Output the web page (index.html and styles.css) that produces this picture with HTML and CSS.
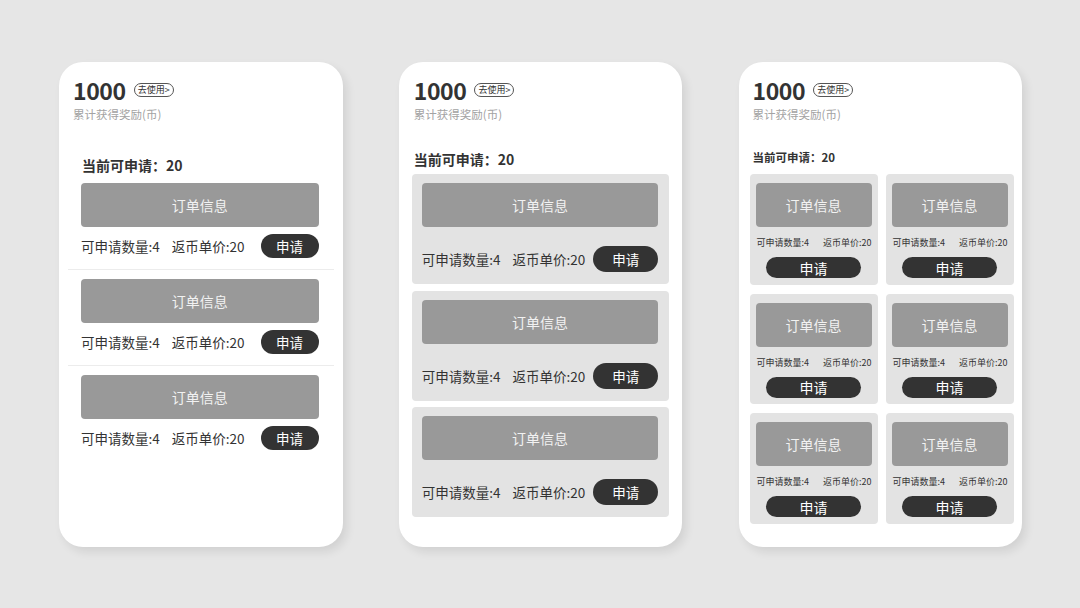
FILE: index.html
```html
<!DOCTYPE html>
<html lang="zh-CN">
<head>
<meta charset="utf-8">
<title>申请</title>
<link rel="stylesheet" href="styles.css">
</head>
<body>
<div class="stage">

  <section class="card">
    <div class="head">
      <div class="amount-row"><span class="amount">1000</span><span class="badge">去使用&gt;</span></div>
      <div class="sub">累计获得奖励(币)</div>
    </div>
    <div class="title t1">当前可申请：20</div>
    <div class="list1">
      <div class="item1">
        <div class="order">订单信息</div>
        <div class="row1"><span class="info">可申请数量:4</span><span class="info">返币单价:20</span><span class="btn b1">申请</span></div>
      </div>
      <div class="item1">
        <div class="order">订单信息</div>
        <div class="row1"><span class="info">可申请数量:4</span><span class="info">返币单价:20</span><span class="btn b1">申请</span></div>
      </div>
      <div class="item1 last">
        <div class="order">订单信息</div>
        <div class="row1"><span class="info">可申请数量:4</span><span class="info">返币单价:20</span><span class="btn b1">申请</span></div>
      </div>
    </div>
  </section>

  <section class="card">
    <div class="head h2">
      <div class="amount-row"><span class="amount">1000</span><span class="badge">去使用&gt;</span></div>
      <div class="sub">累计获得奖励(币)</div>
    </div>
    <div class="title t2">当前可申请：20</div>
    <div class="list2">
      <div class="item2">
        <div class="order">订单信息</div>
        <div class="row2"><span class="info">可申请数量:4</span><span class="info">返币单价:20</span><span class="btn b2">申请</span></div>
      </div>
      <div class="item2">
        <div class="order">订单信息</div>
        <div class="row2"><span class="info">可申请数量:4</span><span class="info">返币单价:20</span><span class="btn b2">申请</span></div>
      </div>
      <div class="item2">
        <div class="order">订单信息</div>
        <div class="row2"><span class="info">可申请数量:4</span><span class="info">返币单价:20</span><span class="btn b2">申请</span></div>
      </div>
    </div>
  </section>

  <section class="card">
    <div class="head">
      <div class="amount-row"><span class="amount">1000</span><span class="badge">去使用&gt;</span></div>
      <div class="sub">累计获得奖励(币)</div>
    </div>
    <div class="title t3">当前可申请：20</div>
    <div class="grid3">
      <div class="item3"><div class="order">订单信息</div><div class="row3"><span>可申请数量:4</span><span>返币单价:20</span></div><span class="btn b3">申请</span></div>
      <div class="item3"><div class="order">订单信息</div><div class="row3"><span>可申请数量:4</span><span>返币单价:20</span></div><span class="btn b3">申请</span></div>
      <div class="item3"><div class="order">订单信息</div><div class="row3"><span>可申请数量:4</span><span>返币单价:20</span></div><span class="btn b3">申请</span></div>
      <div class="item3"><div class="order">订单信息</div><div class="row3"><span>可申请数量:4</span><span>返币单价:20</span></div><span class="btn b3">申请</span></div>
      <div class="item3"><div class="order">订单信息</div><div class="row3"><span>可申请数量:4</span><span>返币单价:20</span></div><span class="btn b3">申请</span></div>
      <div class="item3"><div class="order">订单信息</div><div class="row3"><span>可申请数量:4</span><span>返币单价:20</span></div><span class="btn b3">申请</span></div>
    </div>
  </section>

</div>
</body>
</html>
```
FILE: styles.css
```css
* { box-sizing: border-box; }
html, body {
  margin: 0;
  padding: 0;
  width: 1080px;
  height: 608px;
  overflow: hidden;
  background: #e6e6e6;
  font-family: "Noto Sans CJK SC", "Noto Sans", sans-serif;
  color: #333;
}
.stage {
  display: flex;
  gap: 56.25px;
  padding: 62px 0 0 59px;
}
.card {
  width: 283.5px;
  height: 485px;
  flex-shrink: 0;
  background: #fff;
  border-radius: 24px;
  box-shadow: 4px 5px 10px rgba(0, 0, 0, 0.09);
  padding-top: 16px;
  display: flex;
  flex-direction: column;
}
.head { padding-left: 14px; }
.head.h2 { padding-left: 15px; }
.amount-row {
  display: flex;
  align-items: center;
  height: 24px;
}
.amount {
  font-size: 23px;
  line-height: 24px;
  font-weight: 700;
  color: #333;
  letter-spacing: -0.4px;
}
.badge {
  margin-left: 8px;
  height: 14px;
  padding: 0 3px;
  border: 1px solid #555;
  border-radius: 7px;
  font-size: 9px;
  line-height: 12px;
  color: #333;
}
.sub {
  margin-top: 4px;
  font-size: 11.5px;
  line-height: 16px;
  color: #a3a3a3;
}
.title {
  font-weight: 700;
  color: #333;
}
.t1 { margin: 34px 0 0 23px; font-size: 14px; line-height: 18px; }
.t2 { margin: 28px 0 0 15px; font-size: 14px; line-height: 18px; }
.t3 { margin: 27px 0 0 14px; font-size: 11.5px; line-height: 16px; }

.order {
  height: 44px;
  background: #999;
  border-radius: 4px;
  color: #f2f2f2;
  font-size: 14px;
  display: flex;
  align-items: center;
  justify-content: center;
}
.btn {
  flex-shrink: 0;
  background: #333;
  color: #fff;
  display: flex;
  align-items: center;
  justify-content: center;
  font-size: 13.5px;
}
.info {
  font-size: 13.5px;
  color: #333;
  white-space: nowrap;
}
.info:first-child { margin-right: 12px; }

/* card 1 */
.list1 { margin: 0 9px; }
.item1 {
  padding: 9px 15px 11px 13px;
  border-bottom: 1px solid #ececec;
}
.item1.last { border-bottom: none; }
.row1 {
  margin-top: 7px;
  display: flex;
  align-items: center;
}
.b1 {
  margin-left: auto;
  width: 58px;
  height: 24px;
  border-radius: 12px;
}

/* card 2 */
.list2 {
  margin: 6px 13px 0;
  display: flex;
  flex-direction: column;
  gap: 6.5px;
}
.item2 {
  background: #e3e3e3;
  border-radius: 4px;
  padding: 9px 11px 12px 10px;
}
.row2 {
  margin-top: 19px;
  display: flex;
  align-items: center;
}
.b2 {
  margin-left: auto;
  width: 65px;
  height: 26px;
  border-radius: 13px;
}

/* card 3 */
.grid3 {
  margin: 9px 8px 0 11px;
  display: grid;
  grid-template-columns: 128px 128px;
  gap: 9px 8px;
}
.item3 {
  background: #e3e3e3;
  border-radius: 4px;
  padding: 9px 6px 6px;
  display: flex;
  flex-direction: column;
  align-items: stretch;
  height: 110.5px;
}
.row3 {
  margin-top: 10px;
  display: flex;
  justify-content: space-between;
  font-size: 9px;
  line-height: 12px;
  color: #333;
  padding-left: 1px;
  white-space: nowrap;
}
.b3 {
  margin: 8px auto 0;
  width: 95px;
  height: 21px;
  border-radius: 10.5px;
  font-size: 14px;
}
```
